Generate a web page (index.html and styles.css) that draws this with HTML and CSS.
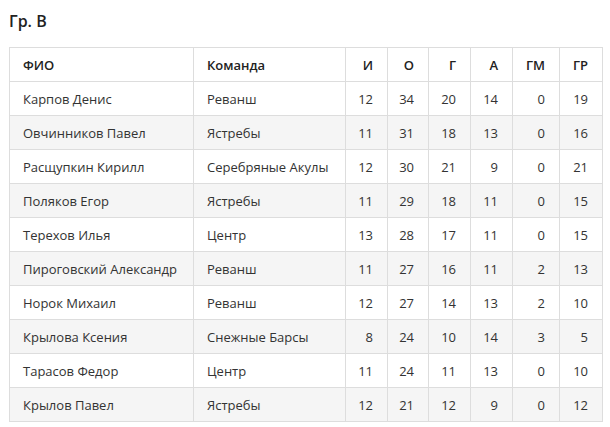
FILE: index.html
```html
<!DOCTYPE html>
<html lang="ru">
<head>
<meta charset="utf-8">
<link rel="stylesheet" href="styles.css">
</head>
<body>
<h3 class="title">Гр. В</h3>
<table class="stats">
  <colgroup>
    <col class="c-name"><col class="c-team"><col class="c-n"><col class="c-n2"><col class="c-n"><col class="c-n"><col class="c-gm"><col class="c-gr">
  </colgroup>
  <thead>
    <tr><th>ФИО</th><th>Команда</th><th class="num">И</th><th class="num">О</th><th class="num">Г</th><th class="num">А</th><th class="num">ГМ</th><th class="num">ГР</th></tr>
  </thead>
  <tbody>
    <tr><td>Карпов Денис</td><td>Реванш</td><td class="num">12</td><td class="num">34</td><td class="num">20</td><td class="num">14</td><td class="num">0</td><td class="num">19</td></tr>
    <tr><td>Овчинников Павел</td><td>Ястребы</td><td class="num">11</td><td class="num">31</td><td class="num">18</td><td class="num">13</td><td class="num">0</td><td class="num">16</td></tr>
    <tr><td>Расщупкин Кирилл</td><td>Серебряные Акулы</td><td class="num">12</td><td class="num">30</td><td class="num">21</td><td class="num">9</td><td class="num">0</td><td class="num">21</td></tr>
    <tr><td>Поляков Егор</td><td>Ястребы</td><td class="num">11</td><td class="num">29</td><td class="num">18</td><td class="num">11</td><td class="num">0</td><td class="num">15</td></tr>
    <tr><td>Терехов Илья</td><td>Центр</td><td class="num">13</td><td class="num">28</td><td class="num">17</td><td class="num">11</td><td class="num">0</td><td class="num">15</td></tr>
    <tr><td>Пироговский Александр</td><td>Реванш</td><td class="num">11</td><td class="num">27</td><td class="num">16</td><td class="num">11</td><td class="num">2</td><td class="num">13</td></tr>
    <tr><td>Норок Михаил</td><td>Реванш</td><td class="num">12</td><td class="num">27</td><td class="num">14</td><td class="num">13</td><td class="num">2</td><td class="num">10</td></tr>
    <tr><td>Крылова Ксения</td><td>Снежные Барсы</td><td class="num">8</td><td class="num">24</td><td class="num">10</td><td class="num">14</td><td class="num">3</td><td class="num">5</td></tr>
    <tr><td>Тарасов Федор</td><td>Центр</td><td class="num">11</td><td class="num">24</td><td class="num">11</td><td class="num">13</td><td class="num">0</td><td class="num">10</td></tr>
    <tr><td>Крылов Павел</td><td>Ястребы</td><td class="num">12</td><td class="num">21</td><td class="num">12</td><td class="num">9</td><td class="num">0</td><td class="num">12</td></tr>
  </tbody>
</table>
</body>
</html>
```
FILE: styles.css
```css
html, body {
  margin: 0;
  padding: 0;
  background: #fff;
}
body {
  padding: 9px 9px 0 9px;
  font-family: "Open Sans", "Noto Sans", sans-serif;
  color: #333;
  font-size: 13px;
}
.title {
  margin: 0;
  height: 24px;
  line-height: 24px;
  font-size: 16px;
  font-weight: 600;
  color: #222;
  margin-bottom: 14px;
}
.stats {
  border-collapse: collapse;
  table-layout: fixed;
  width: 593px;
}
.c-name { width: 184px; }
.c-team { width: 152px; }
.c-n { width: 42px; }
.c-n2 { width: 41px; }
.c-gm { width: 47px; }
.c-gr { width: 43px; }
.stats th, .stats td {
  border: 1px solid #ddd;
  height: 34px;
  padding: 0 13px;
  text-align: left;
  vertical-align: middle;
  white-space: nowrap;
  box-sizing: border-box;
}
.stats th {
  font-weight: 600;
  color: #222;
}
.stats .num {
  text-align: right;
  padding: 0 14px 0 0;
}
.stats tbody tr:nth-child(odd) {
  background: #fff;
}
.stats tbody tr:nth-child(even) {
  background: #f5f5f5;
}
```
